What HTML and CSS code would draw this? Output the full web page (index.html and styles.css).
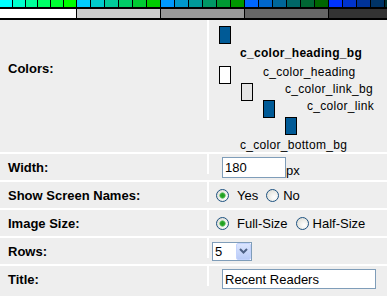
FILE: index.html
```html
<!DOCTYPE html>
<html>

<head>
	<title>Recent Readers settings</title>
	<link rel="stylesheet" href="styles.css">
</head>

<body>
	<div class="strip">
		<div class="palette">
			<div class="tones">
				<span style="background:#00ffff"></span><span style="background:#00ffcc"></span><span style="background:#00ff99"></span><span style="background:#00ff66"></span><span style="background:#00ff33"></span><span style="background:#00ff00"></span>
			</div>
			<div class="tones">
				<span style="background:#00ccff"></span><span style="background:#00cccc"></span><span style="background:#00cc99"></span><span style="background:#00cc66"></span><span style="background:#00cc33"></span><span style="background:#00cc00"></span>
			</div>
			<div class="tones">
				<span style="background:#0099ff"></span><span style="background:#0099cc"></span><span style="background:#009999"></span><span style="background:#009966"></span><span style="background:#009933"></span><span style="background:#009900"></span>
			</div>
			<div class="tones">
				<span style="background:#0066ff"></span><span style="background:#0066cc"></span><span style="background:#006699"></span><span style="background:#006666"></span><span style="background:#006633"></span><span style="background:#006600"></span>
			</div>
			<div class="tones">
				<span style="background:#0033ff"></span><span style="background:#0033cc"></span><span style="background:#003399"></span><span style="background:#003366"></span><span style="background:#003333"></span><span style="background:#003300"></span>
			</div>
			<div class="gray" style="background:#ffffff"></div>
			<div class="gray" style="background:#cccccc"></div>
			<div class="gray" style="background:#999999"></div>
			<div class="gray" style="background:#666666"></div>
			<div class="gray" style="background:#333333"></div>
		</div>
	</div>

	<div class="form">
		<div class="row row-colors">
			<div class="label">Colors:</div>
			<div class="rule"></div>
			<div class="value chart">
				<div class="chart-top"><span class="swatch swatch-blue"></span></div>
				<div class="chart-title">c_color_heading_bg</div>
				<div class="step step-1"><span class="swatch swatch-white"></span><span class="step-name">c_color_heading</span></div>
				<div class="step step-2"><span class="swatch swatch-gray"></span><span class="step-name">c_color_link_bg</span></div>
				<div class="step step-3"><span class="swatch swatch-blue"></span><span class="step-name">c_color_link</span></div>
				<div class="step step-4"><span class="swatch swatch-blue"></span></div>
				<div class="chart-bottom">c_color_bottom_bg</div>
			</div>
		</div>
		<div class="row">
			<div class="label">Width:</div>
			<div class="rule"></div>
			<div class="value value-width">
				<input class="text text-width" type="text" value="180">
				<span class="unit">px</span>
			</div>
		</div>
		<div class="row">
			<div class="label">Show Screen Names:</div>
			<div class="rule"></div>
			<div class="value value-radio">
				<input class="radio" type="radio" name="names" checked><span class="opt">Yes</span>
				<input class="radio radio-second" type="radio" name="names"><span class="opt">No</span>
			</div>
		</div>
		<div class="row">
			<div class="label">Image Size:</div>
			<div class="rule"></div>
			<div class="value value-radio">
				<input class="radio" type="radio" name="size" checked><span class="opt">Full-Size</span>
				<input class="radio radio-second" type="radio" name="size"><span class="opt">Half-Size</span>
			</div>
		</div>
		<div class="row">
			<div class="label">Rows:</div>
			<div class="rule"></div>
			<div class="value value-rows">
				<div class="select">
					<span class="select-text">5</span>
					<span class="select-button">
						<svg width="9" height="6" viewBox="0 0 9 6"><polyline points="1,1 4.5,4.5 8,1" fill="none" stroke="#4d6185" stroke-width="2"/></svg>
					</span>
				</div>
			</div>
		</div>
		<div class="row">
			<div class="label">Title:</div>
			<div class="rule"></div>
			<div class="value value-title">
				<input class="text text-title" type="text" value="Recent Readers">
			</div>
		</div>
	</div>
</body>

</html>
```

FILE: styles.css
```css
* {
	box-sizing: border-box;
}

html,
body {
	margin: 0;
	overflow: hidden;
}

body {
	width: 387px;
	height: 296px;
	background: #eeeeee;
	font-family: "Liberation Sans", Arial, sans-serif;
	font-size: 13px;
	color: #000;
}

/* colour picker strip */
.strip {
	width: 387px;
	overflow: hidden;
}

.palette {
	display: grid;
	grid-template-columns: 76px repeat(4, 83px);
	grid-template-rows: 7px 9px;
	gap: 2px 1px;
	width: 412px;
	padding-bottom: 2px;
	background: #000;
}

.tones {
	display: grid;
	grid-template-columns: repeat(6, 1fr);
	gap: 1px;
}

/* settings table */
.row {
	display: flex;
	align-items: center;
	height: 28px;
	border-top: 2px solid #fff;
}

.row-colors {
	height: 132px;
	align-items: flex-start;
	border-top: none;
}

.label {
	width: 207px;
	padding-left: 8px;
	font-weight: bold;
}

.row-colors .label {
	display: flex;
	align-items: center;
	height: 97px;
}

.rule {
	align-self: flex-start;
	width: 2px;
	height: 20px;
	background: #fff;
}

.row-colors .rule {
	height: 100px;
}

.value {
	display: flex;
	align-items: center;
}

/* colour chart */
.chart {
	display: block;
	padding: 6px 0 0 10px;
	font-size: 12px;
	letter-spacing: 0.3px;
}

.swatch {
	display: block;
	flex: none;
	width: 12px;
	height: 18px;
	border: 1px solid #000;
}

.swatch-blue {
	background: #005a96;
}

.swatch-white {
	background: #fff;
}

.swatch-gray {
	background: #e4e4e4;
}

.chart-top {
	height: 18px;
}

.chart-title {
	margin: 2px 0 0 21px;
	line-height: 14px;
	font-weight: bold;
}

.step {
	display: flex;
	align-items: flex-start;
	height: 17px;
}

.step-1 {
	margin-top: 6px;
}

.step-2 {
	margin-left: 22px;
}

.step-3 {
	margin-left: 44px;
}

.step-4 {
	margin-left: 66px;
}

.step-name {
	margin-left: 32px;
	line-height: 13px;
	white-space: nowrap;
}

.chart-bottom {
	margin: 4px 0 0 21px;
	line-height: 14px;
}

/* form controls */
.text {
	margin: 0;
	padding: 0 2px;
	border: 1px solid #7f9db9;
	background: #fff;
	font-family: inherit;
	font-size: 13px;
	color: #000;
	outline: none;
}

.value-width {
	align-items: flex-end;
	margin-left: 13px;
}

.text-width {
	width: 64px;
	height: 21px;
}

.unit {
	line-height: 15px;
}

.value-radio {
	margin-left: 7px;
}

.radio {
	appearance: none;
	-webkit-appearance: none;
	width: 13px;
	height: 13px;
	margin: 0 8px 0 0;
	border: 1px solid #1c5180;
	border-radius: 50%;
	background: radial-gradient(circle at 65% 65%, #ffffff 0, #f0f0ec 40%, #d6d6cf 100%);
}

.radio:checked {
	background:
		radial-gradient(circle, #1f9a1f 0, #2aa82a 2px, #8fd18f 3px, transparent 3.5px),
		radial-gradient(circle at 65% 65%, #ffffff 0, #f0f0ec 40%, #d6d6cf 100%);
}

.radio-second {
	margin: 0 4px 0 8px;
}

.opt {
	line-height: 15px;
}

.value-rows {
	margin-left: 3px;
}

.select {
	display: flex;
	justify-content: space-between;
	width: 40px;
	height: 19px;
	border: 1px solid #7f9db9;
	background: #fff;
}

.select-text {
	padding-left: 2px;
	line-height: 17px;
}

.select-button {
	display: flex;
	align-items: center;
	justify-content: center;
	width: 15px;
	height: 17px;
	border: 1px solid #c3d3fd;
	border-radius: 2px;
	background: linear-gradient(#dbe5fe, #b9cbf7);
}

.value-title {
	margin-left: 13px;
}

.text-title {
	width: 154px;
	height: 20px;
}
```
